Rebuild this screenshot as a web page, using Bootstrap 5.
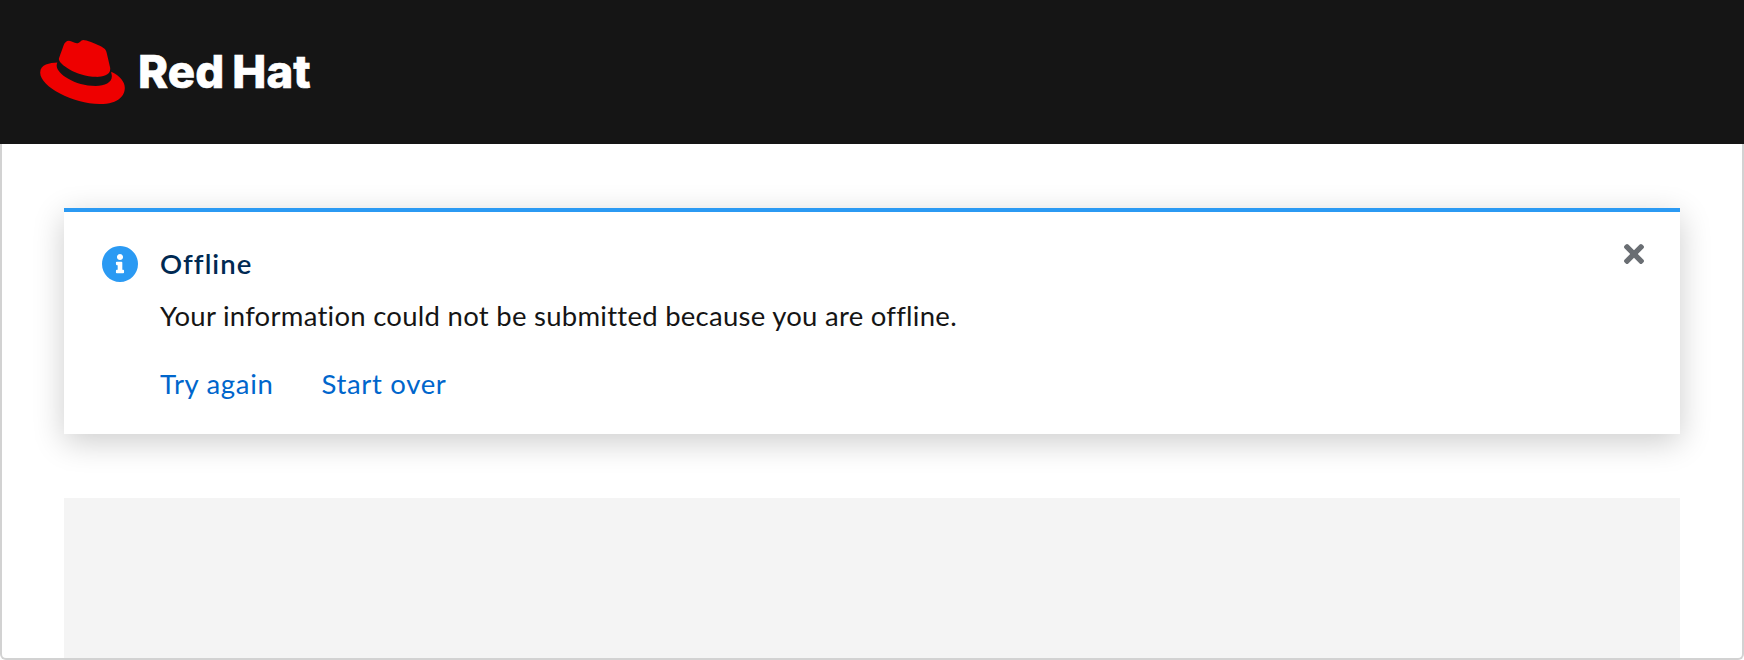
<!DOCTYPE html>
<html lang="en">
<head>
<meta charset="utf-8">
<meta name="viewport" content="width=device-width, initial-scale=1">
<title>Red Hat</title>
<link href="https://cdn.jsdelivr.net/npm/bootstrap@5.3.0/dist/css/bootstrap.min.css" rel="stylesheet">
<style>
body { font-family: Lato, "Open Sans", sans-serif; font-size: 27.5px; color: #151515; line-height: 42px; font-variant-ligatures: none; }
.masthead { height: 144px; background: #151515; padding-left: 40px; }
.hat { width: 85px; height: 64px; fill: #e00; margin-top: -1px; }
.brand { font-family: Inter, sans-serif; font-weight: 800; font-size: 45.5px; line-height: 56px; color: #fff; margin-left: 13px; letter-spacing: .1px; word-spacing: -2px; white-space: nowrap; -webkit-text-stroke: .6px #fff; }
.page-frame { height: 516px; border: 2px solid #d2d2d2; border-top: 0; border-radius: 0 0 6px 6px; padding: 64px 62px 0; overflow: hidden; }
.notice { height: 226px; border: 0; border-top: 4px solid #2b9af3; border-radius: 0; box-shadow: 0 8px 30px rgba(0,0,0,.2); padding: 32px 36px 0 38px; margin-bottom: 64px; background: #fff; color: inherit; }
.info-icon { width: 36px; height: 36px; fill: #2b9af3; margin-top: 2px; }
.notice-text { margin-left: 22px; margin-top: -1.5px; }
.notice-title { font-size: 27.5px; line-height: 42px; font-weight: 600; color: #002952; margin-bottom: 10px; letter-spacing: 1.05px; }
.notice-body { letter-spacing: .27px; }
.notice-actions { margin-top: 26px; gap: 48px; letter-spacing: .68px; }
.notice-actions a { color: #06c; }
.close-icon { width: 20px; height: 20px; fill: #6a6e73; display: block; }
.filler { background: #f4f4f4; height: 160px; }
</style>
</head>
<body>
<header class="masthead d-flex align-items-center">
  <svg class="hat flex-shrink-0" viewBox="0 2.922 24 18.156" aria-hidden="true"><path d="M16.009 13.386c1.577 0 3.86-.326 3.86-2.202a1.765 1.765 0 0 0-.04-.431l-.94-4.08c-.216-.898-.406-1.305-1.982-2.093-1.223-.625-3.888-1.658-4.676-1.658-.733 0-.947.946-1.822.946-.842 0-1.467-.706-2.255-.706-.757 0-1.25.515-1.63 1.576 0 0-1.06 2.99-1.197 3.424a.81.81 0 0 0-.028.245c0 1.162 4.577 4.974 10.71 4.974m4.101-1.435c.218 1.032.218 1.14.218 1.277 0 1.765-1.984 2.745-4.593 2.745-5.895.004-11.06-3.451-11.06-5.734a2.326 2.326 0 0 1 .19-.925C2.746 9.415 0 9.794 0 12.217c0 3.969 9.405 8.861 16.851 8.861 5.71 0 7.149-2.582 7.149-4.62 0-1.605-1.387-3.425-3.887-4.512"/></svg>
  <span class="brand">Red Hat</span>
</header>
<main class="page-frame">
  <section class="notice d-flex align-items-start" role="alert">
    <svg class="info-icon flex-shrink-0" viewBox="8 8 496 496" aria-hidden="true"><path d="M256 8C119.043 8 8 119.083 8 256c0 136.997 111.043 248 248 248s248-111.003 248-248C504 119.083 392.957 8 256 8zm0 110c23.196 0 42 18.804 42 42s-18.804 42-42 42-42-18.804-42-42 18.804-42 42-42zm56 254c0 6.627-5.373 12-12 12h-88c-6.627 0-12-5.373-12-12v-24c0-6.627 5.373-12 12-12h12v-64h-12c-6.627 0-12-5.373-12-12v-24c0-6.627 5.373-12 12-12h64c6.627 0 12 5.373 12 12v100h12c6.627 0 12 5.373 12 12v24z"/></svg>
    <div class="notice-text flex-grow-1">
      <h2 class="notice-title">Offline</h2>
      <p class="notice-body mb-0">Your information could not be submitted because you are offline.</p>
      <div class="notice-actions d-flex">
        <a class="text-decoration-none" href="#">Try again</a>
        <a class="text-decoration-none" href="#">Start over</a>
      </div>
    </div>
    <button type="button" class="btn p-0 border-0 d-block lh-1" aria-label="Close">
      <svg class="close-icon" viewBox="0 80 352 352" aria-hidden="true"><path d="M242.72 256l100.07-100.07c12.28-12.28 12.28-32.19 0-44.48l-22.24-22.24c-12.28-12.28-32.19-12.28-44.48 0L176 189.28 75.93 89.21c-12.28-12.28-32.19-12.28-44.48 0L9.21 111.45c-12.28 12.28-12.28 32.19 0 44.48L109.28 256 9.21 356.07c-12.28 12.28-12.28 32.19 0 44.48l22.24 22.24c12.28 12.28 32.2 12.28 44.48 0L176 322.72l100.07 100.07c12.28 12.28 32.2 12.28 44.48 0l22.24-22.24c12.28-12.28 12.28-32.19 0-44.48L242.72 256z"/></svg>
    </button>
  </section>
  <div class="filler"></div>
</main>
<script src="https://cdn.jsdelivr.net/npm/bootstrap@5.3.0/dist/js/bootstrap.bundle.min.js"></script>
</body>
</html>
